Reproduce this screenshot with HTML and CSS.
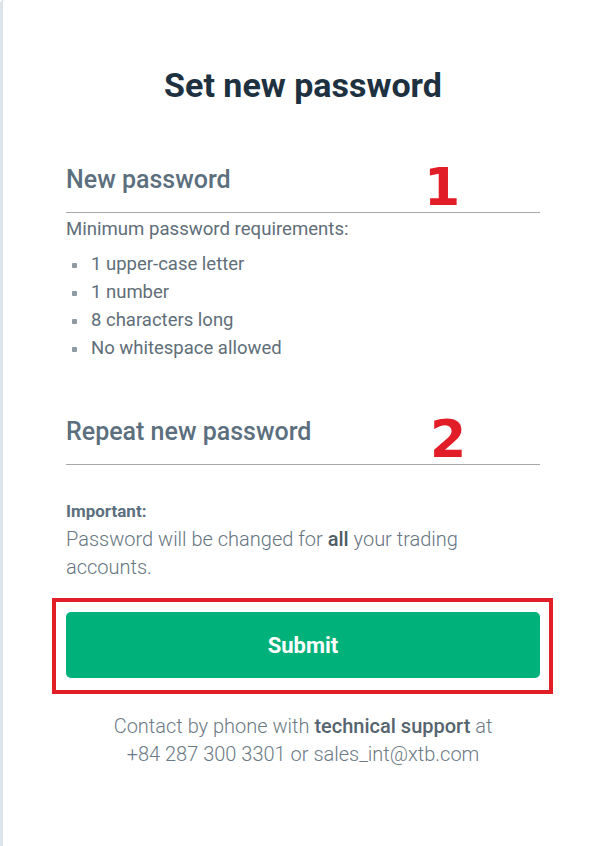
FILE: index.html
```html
<!DOCTYPE html>
<html lang="en">
<head>
<meta charset="utf-8">
<title>Set new password</title>
<link rel="stylesheet" href="styles.css">
</head>
<body>
<div class="card">
  <h1 class="title">Set new password</h1>

  <div class="field">
    <span class="field-label">New password</span>
    <span class="mark mark-1">1</span>
  </div>
  <p class="req-title">Minimum password requirements:</p>
  <ul class="req-list">
    <li>1 upper-case letter</li>
    <li>1 number</li>
    <li>8 characters long</li>
    <li>No whitespace allowed</li>
  </ul>

  <div class="field field-repeat">
    <span class="field-label">Repeat new password</span>
    <span class="mark mark-2">2</span>
  </div>

  <p class="important">Important:</p>
  <p class="note">Password will be changed for <strong>all</strong> your trading accounts.</p>

  <div class="highlight">
    <button class="submit" type="button">Submit</button>
  </div>

  <p class="contact">Contact by phone with <strong>technical support</strong> at +84 287 300 3301 or sales_int@xtb.com</p>
</div>
</body>
</html>
```

FILE: styles.css
```css
html, body {
  margin: 0;
  padding: 0;
  background: #ffffff;
}

body {
  font-family: Roboto, "Liberation Sans", Arial, sans-serif;
}

.card {
  box-sizing: border-box;
  min-height: 846px;
  border-left: 3px solid #dde4e9;
  border-top-left-radius: 4px;
  padding: 65px 60px 0 63px;
  display: flex;
  flex-direction: column;
}

.title {
  margin: 0;
  font-size: 34px;
  line-height: 40px;
  font-weight: 700;
  color: #1d3141;
  text-align: center;
}

.field {
  position: relative;
  margin-top: 60px;
  padding-bottom: 17px;
  border-bottom: 1px solid #a4a8ab;
}

.field-repeat {
  margin-top: 55px;
}

.field-label {
  display: block;
  font-size: 25px;
  line-height: 30px;
  font-weight: 500;
  color: #5c6f7e;
}

.mark {
  position: absolute;
  font-family: "DejaVu Sans", sans-serif;
  font-weight: 700;
  font-size: 52px;
  line-height: 1;
  color: #e11d27;
}

.mark-1 {
  left: 358px;
  top: -4px;
}

.mark-2 {
  left: 364px;
  top: -4px;
}

.req-title {
  margin: 2px 0 0;
  font-size: 18.6px;
  line-height: 28px;
  color: #5f6e79;
}

.req-list {
  list-style: none;
  margin: 7px 0 0;
  padding: 0;
}

.req-list li {
  position: relative;
  padding-left: 25px;
  font-size: 18.5px;
  line-height: 28px;
  color: #5f6e79;
}

.req-list li::before {
  content: "";
  position: absolute;
  left: 6px;
  top: 13px;
  width: 5px;
  height: 5px;
  border-radius: 1px;
  background: #8d9aa4;
}

.important {
  margin: 35px 0 0;
  font-size: 17px;
  line-height: 22px;
  font-weight: 700;
  color: #5c6f7e;
}

.note {
  margin: 3px 0 0;
  font-size: 20px;
  line-height: 28px;
  font-weight: 300;
  color: #66757f;
}

.note strong {
  font-weight: 500;
  color: #4e5c66;
}

.highlight {
  margin: 17px -13px 0 -14px;
  border: 4px solid #e01f26;
  padding: 10px 9px 12px 10px;
}

.submit {
  display: block;
  width: 100%;
  height: 66px;
  border: 0;
  border-radius: 5px;
  background: #00b27a;
  color: #ffffff;
  font-family: Roboto, "Liberation Sans", Arial, sans-serif;
  font-size: 22px;
  font-weight: 700;
  cursor: pointer;
}

.contact {
  margin: 18px 0 0;
  padding: 0 35px;
  text-align: center;
  font-size: 20px;
  line-height: 28px;
  font-weight: 300;
  color: #6c7a85;
}

.contact strong {
  font-weight: 500;
  color: #56646f;
}
```
